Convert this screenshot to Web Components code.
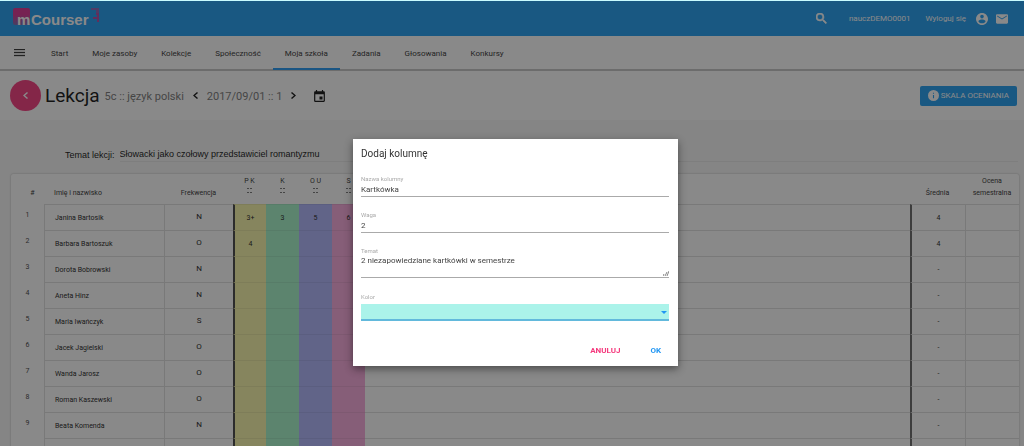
<!DOCTYPE html>
<html lang="pl">
<head>
<meta charset="utf-8">
<meta name="viewport" content="width=device-width, initial-scale=1">
<title>mCourser – Lekcja</title>
<style>
html, body { margin: 0; height: 100%; }
body {
  overflow: hidden; background: #f7f7f7; color: #111;
  font-family: Roboto, "Liberation Sans", sans-serif; font-size: 8px; line-height: 12px;
  --blue: #2196f3; --pink: #f5387c;
}
</style>
</head>
<body>
<course-app></course-app>
<script>
const define = (name, html, setup) => customElements.define(name, class extends HTMLElement {
  constructor() {
    super();
    const t = document.createElement('template');
    t.innerHTML = '<style>*{box-sizing:border-box}a{color:inherit;text-decoration:none}button{font:inherit;border:0;padding:0;margin:0;background:none;color:inherit}svg{display:block;flex:none;fill:currentColor}</style>' + html;
    this.attachShadow({ mode: 'open' }).append(t.content.cloneNode(true));
    if (setup) setup(this.shadowRoot);
  }
});

define('top-bar', `
<style>
:host { display: flex; align-items: center; height: 36px; flex: none; padding: 0 16px 0 13px; background: #1f9cf0; border-top: 1px solid #c9fbff; color: #fff; }
.logo { display: flex; align-items: flex-start; font: bold 15px/18px "Liberation Sans", sans-serif; }
.m { background: linear-gradient(#d83090 40%, #7a68b0); width: 17px; height: 17px; padding: 3px 0 0 4px; margin-right: 1px; border-radius: 2px; }
.name { padding-top: 3px; }
.logo svg { margin-left: 2px; }
nav { margin-left: auto; display: flex; align-items: center; }
.search { margin-right: 22px; }
.user { margin-right: 15px; }
.out { margin-right: 10px; }
.acc { margin-right: 8px; }
</style>
<a class="logo" href="#"><span class="m">m</span><span class="name">Courser</span>
<svg width="9" height="16" viewBox="0 0 9 16"><path fill="#8a62b8" d="M0 0h8v5H5V2H0z"/><path fill="#b048a4" d="M5 5h3v9H6v-3H2V9h4V7H5z"/></svg></a>
<nav>
<button class="search" aria-label="Szukaj"><svg width="11" height="11" viewBox="3 3 18 18"><path d="M15.5 14h-.79l-.28-.27A6.47 6.47 0 0 0 16 9.500 6.500 6.500 0 1 0 9.500 16c1.610 0 3.090-.59 4.230-1.570l.27.28v.79l5 4.990L20.490 19l-4.990-5zm-6 0C7.010 14 5 11.990 5 9.500S7.010 5 9.500 5 14 7.010 14 9.500 11.990 14 9.500 14z" stroke="currentColor"/></svg></button>
<a class="user" href="#">nauczDEMO0001</a>
<a class="out" href="#">Wyloguj się</a>
<a class="acc" href="#" aria-label="Konto"><svg width="12" height="12" viewBox="2 2 20 20"><path d="M12 2C6.480 2 2 6.480 2 12s4.480 10 10 10 10-4.480 10-10S17.520 2 12 2zm0 3c1.660 0 3 1.340 3 3s-1.340 3-3 3-3-1.340-3-3 1.340-3 3-3zm0 14.200c-2.500 0-4.710-1.280-6-3.220.03-1.990 4-3.080 6-3.080 1.990 0 5.970 1.090 6 3.080-1.290 1.940-3.500 3.220-6 3.220z"/></svg></a>
<a href="#" aria-label="Wiadomości"><svg width="12" height="10" viewBox="2 4 20 16"><path d="M20 4H4c-1.100 0-2 .9-2 2v12c0 1.100.9 2 2 2h16c1.100 0 2-.9 2-2V6c0-1.100-.9-2-2-2zm0 4-8 5-8-5V6l8 5 8-5v2z"/></svg></a>
</nav>`);

define('main-menu', `
<style>
:host { display: flex; align-items: stretch; height: 35px; flex: none; background: #fff; border-bottom: 2px solid #c4c4c4; color: #333; }
button { width: 39px; padding-top: 1px; display: grid; place-items: center; }
nav { display: flex; margin-bottom: -1px; }
a { padding: 12px 12px 0; border-bottom: 2px solid transparent; }
a.on { border-color: var(--blue); }
</style>
<button aria-label="Menu"><svg width="11" height="8" viewBox="0 0 11 8"><path d="M0 0h11v1H0zM0 3h11v1H0zM0 6h11v1H0z" stroke="currentColor" stroke-width=".3"/></svg></button>
<nav><a href="#">Start</a><a href="#">Moje zasoby</a><a href="#">Kolekcje</a><a href="#">Społeczność</a><a class="on" href="#">Moja szkoła</a><a href="#">Zadania</a><a href="#">Głosowania</a><a href="#">Konkursy</a></nav>`);

define('lesson-header', `
<style>
:host { display: flex; align-items: center; height: 49px; flex: none; padding: 0 7px 0 10px; background: #fff; }
.back { width: 31px; height: 31px; border-radius: 50%; background: var(--pink); color: #fff; display: grid; place-items: center; }
h1 { margin: 0 5px 0 4px; font-size: 19px; line-height: 24px; font-weight: 400; }
.sub { font-size: 11px; line-height: 16px; color: #777; padding-top: 3px; }
.nav { margin: 0 9px; }
.cal { margin-left: 9px; }
.scale { margin-left: auto; display: flex; align-items: center; gap: 2px; height: 20px; padding: 0 8px; border-radius: 2px; background: #1f9cf0; color: #fff; white-space: nowrap; }
</style>
<button class="back" aria-label="Wstecz"><svg width="5" height="7" viewBox="0 0 5 7"><path d="M4 0 5 1 2 3.500 5 6 4 7 0 3.500z"/></svg></button>
<h1>Lekcja</h1><span class="sub">5c :: język polski</span>
<button class="nav" aria-label="Poprzednia"><svg width="5" height="7" viewBox="0 0 5 7"><path d="M4 0 5 1 2 3.500 5 6 4 7 0 3.500z"/></svg></button>
<span class="sub">2017/09/01 :: 1</span>
<button class="nav" aria-label="Następna"><svg width="5" height="7" viewBox="0 0 5 7"><path d="M1 0 0 1 3 3.500 0 6 1 7 5 3.500z"/></svg></button>
<button class="cal" aria-label="Kalendarz"><svg width="11" height="12" viewBox="3 1 18 20"><path d="M17 12h-5v5h5v-5zM16 1v2H8V1H6v2H5c-1.110 0-1.990.9-1.990 2L3 19a2 2 0 0 0 2 2h14c1.100 0 2-.9 2-2V5c0-1.100-.9-2-2-2h-1V1h-2zm3 18H5V8h14v11z"/></svg></button>
<button class="scale"><svg width="11" height="11" viewBox="2 2 20 20"><path d="M12 2a10 10 0 1 0 0 20 10 10 0 0 0 0-20zm1 15h-2v-6h2v6zm0-8h-2V7h2v2z"/></svg>SKALA OCENIANIA</button>`);

define('lesson-topic', `
<style>
:host { display: flex; gap: 5px; padding: 26px 6px 0 65px; font: 9px/16px "Liberation Sans", sans-serif; }
label { padding-top: 1px; }
input { flex: 1; height: 16px; min-width: 0; font: inherit; color: inherit; border: 0; border-bottom: 1px solid #e8e8e8; background: none; padding: 0; }
</style>
<label for="t">Temat lekcji:</label><input id="t" value="Słowacki jako czołowy przedstawiciel romantyzmu">`);

const people = [['Janina Bartosik','N','3+','3','5','6','4'],['Barbara Bartoszuk','O','4','','','','4'],['Dorota Bobrowski','N'],['Aneta Hinz','N'],['Maria Iwańczyk','S'],['Jacek Jagielski','O'],['Wanda Jarosz','O'],['Roman Kaszewski','O'],['Beata Komenda','N']];
define('grade-table', `
<style>
:host { display: block; margin: 11px 5px 0 11px; background: #fff; border-radius: 2px; box-shadow: 0 0 2px #aaa; color: #222; }
table { width: 100%; table-layout: fixed; border-collapse: separate; border-spacing: 0; font-size: 7px; }
th, td { padding: 0; text-align: center; font-weight: 400; }
thead th { height: 30px; line-height: 12px; vertical-align: bottom; padding-bottom: 5px; color: #333; }
thead th.g { vertical-align: top; padding-top: 1px; }
.n { text-align: left; padding-left: 10px; }
tbody td { height: 26px; border-top: 1px solid #dedede; border-left: 1px solid #dedede; }
tbody td:first-child { border: 0; vertical-align: top; padding: 5px 0 0; color: #444; }
tbody td.f { font-size: 8px; padding-bottom: 2px; }
tbody td.c { border-left: 0; border-top-color: rgba(0,0,0,.06); }
tbody td.a { background: #f8f6a8; border-left: 2px solid #444; }
tbody td.b { background: #a4f4c8; }
tbody td.d { background: #aeb4fc; }
tbody td.e { background: #f8a8dc; }
tbody td.s { border-left: 0; }
tbody td.avg { border-left: 2px solid #666; }
.dots { display: block; margin: 1px auto 0; fill: #777; }
</style>
<table>
<colgroup><col style="width:33px"><col style="width:120px"><col style="width:69px"><col style="width:33px"><col style="width:33px"><col style="width:33px"><col style="width:33px"><col><col style="width:55px"><col style="width:54px"></colgroup>
<thead><tr><th style="padding-left:10px">#</th><th class="n">Imię i nazwisko</th><th>Frekwencja</th><th class="g">P K</th><th class="g">K</th><th class="g">O U</th><th class="g">S</th><th></th><th>Średnia</th><th>Ocena semestralna</th></tr></thead>
<tbody></tbody>
</table>`, root => {
  root.querySelectorAll('.g').forEach(th => th.insertAdjacentHTML('beforeend', '<svg class="dots" width="5" height="5" viewBox="0 0 5 5"><path d="M0 0h2v1H0zM3 0h2v1H3zM0 4h2v1H0zM3 4h2v1H3z"/></svg>'));
  root.querySelector('tbody').innerHTML = [...people, null].map((p, i) => {
    const v = k => p ? p[k] || '' : '';
    return `<tr><td>${p ? i + 1 : ''}</td><td class="n">${v(0)}</td><td class="f">${v(1)}</td><td class="c a">${v(2)}</td><td class="c b">${v(3)}</td><td class="c d">${v(4)}</td><td class="c e">${v(5)}</td><td class="s"></td><td class="avg">${p ? p[6] || '-' : ''}</td><td></td></tr>`;
  }).join('');
});

define('modal-scrim', `
<style>
:host { position: fixed; inset: 1px 0 0; display: flex; justify-content: center; align-items: flex-start; padding: 138px 0 0 7px; background: rgba(20,20,20,.5); }
</style><slot></slot>`);

define('column-dialog', `
<style>
:host { display: block; width: 325px; max-width: 100%; padding: 8px 9px 8px 8px; background: #fff; color: #444; box-shadow: 0 3px 8px rgba(0,0,0,.45); }
h2 { margin: 0 0 14px; font-size: 10px; line-height: 14px; font-weight: 400; color: #333; }
.f { display: flex; flex-direction: column; margin-bottom: 14px; }
label { font-size: 6px; line-height: 8px; color: #aaa; }
input, textarea, select { display: block; width: 100%; margin: 0; padding: 0; border: 0; border-bottom: 1px solid #aaa; border-radius: 0; background: none; font: 8px/12px Roboto, sans-serif; color: #444; outline: 0; }
input { height: 14px; }
textarea { height: 23px; resize: none; overflow: hidden; }
.area, .color { position: relative; }
.area { margin-bottom: 15px; }
.area svg { position: absolute; right: 0; bottom: 2px; width: 6px; height: 6px; stroke: #888; fill: none; }
select { appearance: none; height: 17px; margin-top: 3px; background: #abf3ea; border-bottom: 2px solid #62b9dc; }
.color svg { position: absolute; right: 2px; bottom: 7px; color: var(--blue); }
.acts { display: flex; justify-content: flex-end; gap: 30px; padding: 9px 8px 0 0; font-weight: 700; line-height: 14px; color: var(--blue); }
.no { color: #f5387c; }
</style>
<h2>Dodaj kolumnę</h2>
<div class="f"><label for="n">Nazwa kolumny</label><input id="n" value="Kartkówka"></div>
<div class="f"><label for="w">Waga</label><input id="w" value="2"></div>
<div class="f area"><label for="t">Temat</label><textarea id="t">2 niezapowiedziane kartkówki w semestrze</textarea><svg viewBox="0 0 6 6"><path d="M0 6l1-2M2 6l2-4M4 6l2-5"/></svg></div>
<div class="f color"><label for="k">Kolor</label><select id="k"><option></option></select><svg width="6" height="3" viewBox="0 0 6 3"><path d="M0 0h6L3 3z"/></svg></div>
<div class="acts"><button class="no">ANULUJ</button><button>OK</button></div>`);

define('course-app', `
<style>:host { display: flex; flex-direction: column; height: 100%; }</style>
<top-bar></top-bar><main-menu></main-menu><lesson-header></lesson-header><lesson-topic></lesson-topic><grade-table></grade-table>
<modal-scrim><column-dialog role="dialog" aria-label="Dodaj kolumnę"></column-dialog></modal-scrim>`);
</script>
</body>
</html>
